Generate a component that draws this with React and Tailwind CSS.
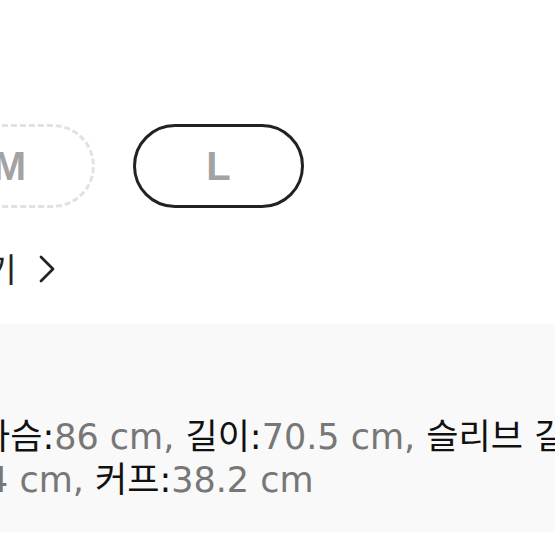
export default function App() {
  const font = { fontFamily: '"DejaVu Sans", "Noto Sans CJK KR", sans-serif' };
  return (
    <div className="w-[555px] h-[555px] overflow-hidden bg-white flex flex-col">
      <div className="pt-[124px] flex gap-[38px] -ml-[76px] shrink-0">
        <div className="w-[171px] h-[84px] shrink-0 rounded-full border-[3px] border-dashed border-[#e2e2e2] flex items-center justify-center">
          <span className="text-[40px] font-bold text-[#a3a3a3] leading-none" style={{ fontFamily: '"Liberation Sans", sans-serif' }}>M</span>
        </div>
        <div className="w-[171px] h-[84px] shrink-0 rounded-full border-[3px] border-[#222] flex items-center justify-center">
          <span className="text-[40px] font-bold text-[#a3a3a3] leading-none" style={{ fontFamily: '"Liberation Sans", sans-serif' }}>L</span>
        </div>
      </div>

      <div className="mt-[40px] h-[40px] flex items-center -ml-[44px] shrink-0">
        <span className="text-[33px] text-[#222] leading-none whitespace-nowrap" style={{ fontFamily: '"Noto Sans CJK KR", sans-serif' }}>보기</span>
        <svg className="ml-[21px]" width="20" height="32" viewBox="0 0 20 32" fill="none">
          <path d="M3 5 L15 17 L3 29" stroke="#222" strokeWidth="2.8" strokeLinecap="round" strokeLinejoin="round" />
        </svg>
      </div>

      <div className="mt-[36px] h-[208px] bg-[#f9f9f9] pt-[92px] shrink-0 text-[35px] leading-[43px]" style={font}>
        <div className="-ml-[22px] whitespace-nowrap">
          <span className="text-[#111]">가슴:</span><span className="text-[#777]">86 cm, </span>
          <span className="text-[#111]">길이:</span><span className="text-[#777]">70.5 cm, </span>
          <span className="text-[#111]">슬리브 길이:</span><span className="text-[#777]">64 cm,</span>
        </div>
        <div className="-ml-[14px] whitespace-nowrap">
          <span className="text-[#777]">4 cm, </span>
          <span className="text-[#111]">커프:</span><span className="text-[#777]">38.2 cm</span>
        </div>
      </div>
    </div>
  );
}
